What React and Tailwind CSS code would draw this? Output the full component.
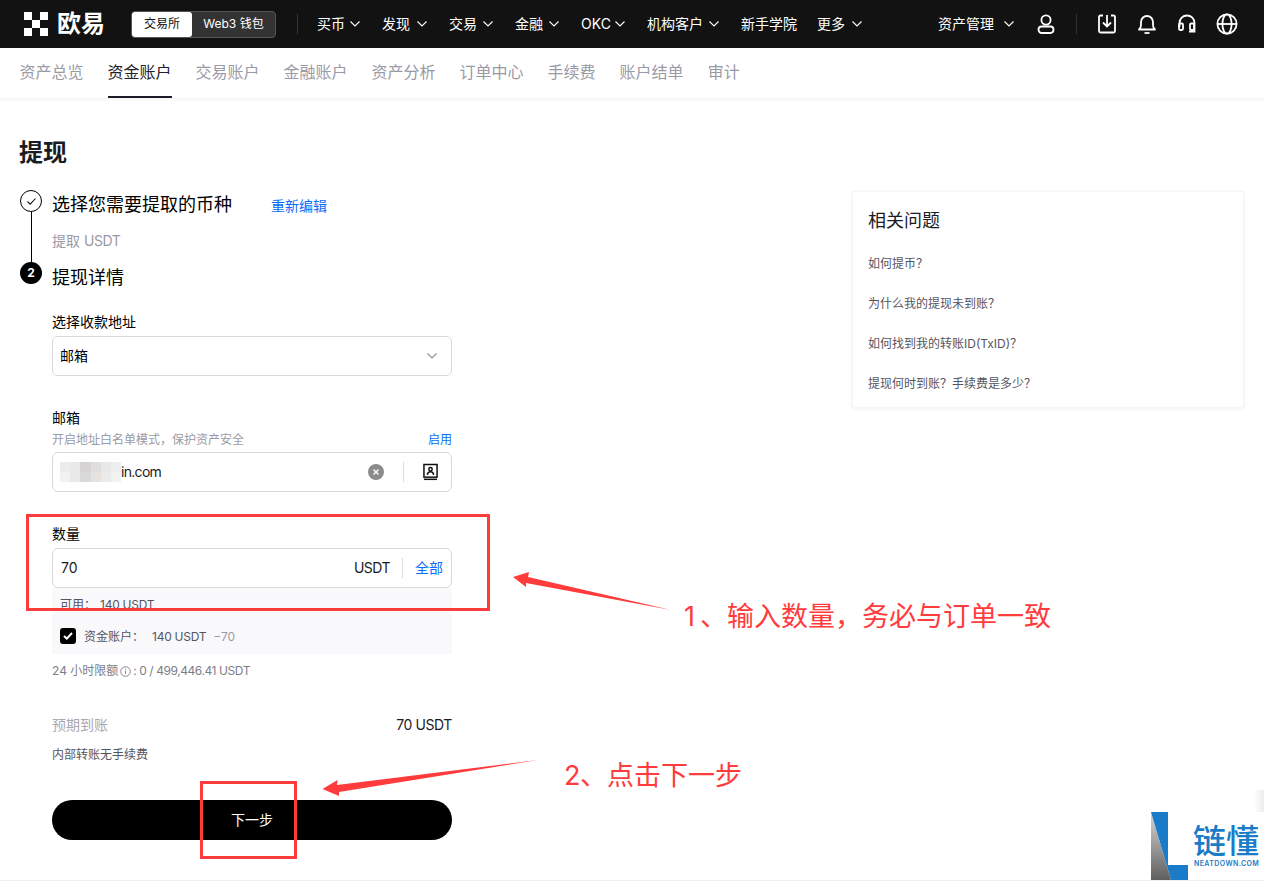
import React from "react";

const Chevron = ({ className = "text-white" }) => (
  <svg width="12" height="8" viewBox="0 0 12 8" fill="none" className={className}>
    <path d="M1.5 1.5 6 6l4.5-4.5" stroke="currentColor" strokeWidth="1.1" />
  </svg>
);

const navItems = [
  ["买币", true, "w-[44px]"],
  ["发现", true, "w-[46px]"],
  ["交易", true, "w-[45px]"],
  ["金融", true, "w-[45px]"],
  ["OKC", true, "w-[45px]"],
  ["机构客户", true, "w-[73px]"],
  ["新手学院", false, "w-[55px]"],
  ["更多", true, "w-[46px]"],
];

const tabs = ["资产总览", "资金账户", "交易账户", "金融账户", "资产分析", "订单中心", "手续费", "账户结单", "审计"];

const faqs = ["如何提币？", "为什么我的提现未到账？", "如何找到我的转账ID(TxID)？", "提现何时到账？手续费是多少？"];

const mosaic = [
  "#ececec", "#e9e7e7", "#d5d3d3", "#dfdddd", "#e8e8e8", "#eeeeee",
  "#f1f1f1", "#e9e9e9", "#d9d9d9", "#e6e2e0", "#ebebeb", "#f1f3f3",
];

function Header() {
  return (
    <header className="h-12 bg-[#121212] flex items-center pl-6 pr-[26px] text-white">
      <svg width="24" height="24" viewBox="0 0 24 24" fill="#fff" className="shrink-0">
        <rect x="0" y="0" width="8" height="8" />
        <rect x="16" y="0" width="8" height="8" />
        <rect x="8" y="8" width="8" height="8" />
        <rect x="0" y="16" width="8" height="8" />
        <rect x="16" y="16" width="8" height="8" />
      </svg>
      <span className="ml-[9px] text-[24px] leading-6 font-bold w-[47px] whitespace-nowrap">欧易</span>
      <div className="ml-[27px] w-[145px] h-[27px] rounded bg-[#333333] border border-[#555555] flex items-center text-xs">
        <span className="w-[60px] h-[25px] bg-white text-[#121212] rounded-[3px] flex items-center justify-center">交易所</span>
        <span className="flex-1 text-center">Web3 钱包</span>
      </div>
      <div className="ml-[21px] w-px h-5 bg-[#333333]" />
      <nav className="ml-[19px] flex items-center gap-[21px] text-sm">
        {navItems.map(([t, c, w]) => (
          <div key={t} className={`flex items-center justify-between whitespace-nowrap ${w}`}>
            <span>{t}</span>
            {c && <Chevron />}
          </div>
        ))}
      </nav>
      <div className="ml-auto flex items-center">
        <span className="text-sm">资产管理</span>
        <span className="ml-[9px] flex"><Chevron /></span>
        <svg width="18" height="20" viewBox="0 0 18 20" fill="none" stroke="#fff" strokeWidth="1.8" className="ml-[22px]">
          <circle cx="9" cy="6" r="4.6" />
          <rect x="1.5" y="12.5" width="15" height="6.5" rx="3.2" />
        </svg>
        <div className="ml-[21px] w-px h-5 bg-[#333333]" />
        <svg width="20" height="20" viewBox="0 0 20 20" fill="none" stroke="#fff" strokeWidth="1.8" className="ml-[20px]">
          <path d="M6 1.5H3.5a1.5 1.5 0 0 0-1.5 1.5v14a1.5 1.5 0 0 0 1.5 1.5h13A1.5 1.5 0 0 0 18 17V3a1.5 1.5 0 0 0-1.5-1.5H14" />
          <path d="M10 1v11M6 8.5l4 4 4-4" />
        </svg>
        <svg width="20" height="20" viewBox="0 0 20 20" fill="none" stroke="#fff" strokeWidth="1.8" className="ml-[20px]">
          <path d="M2 15.5c1.6-1.2 2-2.6 2-4.5V8a6 6 0 0 1 12 0v3c0 1.9.4 3.3 2 4.5z" strokeLinejoin="round" />
          <path d="M7.5 19h5" />
        </svg>
        <svg width="20" height="20" viewBox="0 0 20 20" fill="none" stroke="#fff" strokeWidth="1.8" className="ml-[20px]">
          <path d="M2.5 13V9a7.5 7.5 0 0 1 15 0v5" />
          <rect x="2" y="9.5" width="4" height="6.5" rx="1.2" />
          <rect x="13" y="9.5" width="4" height="6.5" rx="1.2" />
          <path d="M17.5 14v3.5H12" />
        </svg>
        <svg width="22" height="22" viewBox="0 0 22 22" fill="none" stroke="#fff" strokeWidth="1.8" className="ml-[19px]">
          <circle cx="11" cy="11" r="9.6" />
          <ellipse cx="11" cy="11" rx="4.6" ry="9.6" />
          <path d="M1.5 11h19" />
        </svg>
      </div>
    </header>
  );
}

function SubNav() {
  return (
    <div className="h-[50px] bg-white flex pl-[19.5px] gap-6 text-base text-[#9a9aa6] shadow-[0_1px_4px_rgba(0,0,0,0.07)]">
      {tabs.map((t) => (
        <a
          key={t}
          className={`h-full flex items-center whitespace-nowrap border-b-2 ${t === "资金账户" ? "border-[#1c1c2b] text-[#22222c]" : "border-transparent"}`}
        >
          {t}
        </a>
      ))}
    </div>
  );
}

function Divider() {
  return <span className="block w-px h-5 bg-[#dcdcdc]" />;
}

function WithdrawForm() {
  return (
    <div className="w-[433px] shrink-0">
      <h1 className="h-[34px] text-2xl leading-[34px] font-bold text-[#1b1b24]">提现</h1>
      <div className="mt-5 flex">
        <div className="w-[33px] shrink-0 flex flex-col pl-px">
          <div className="w-[22px] h-[22px] rounded-full border border-black flex items-center justify-center">
            <svg width="11" height="9" viewBox="0 0 11 9" fill="none" stroke="#111" strokeWidth="1.1">
              <path d="M1.5 4.5 4.2 7.2 9.5 1.5" />
            </svg>
          </div>
          <div className="ml-[10.5px] w-[1.5px] h-[50px] bg-black" />
          <div className="w-[22px] h-[22px] rounded-full bg-black text-white text-xs font-bold flex items-center justify-center">2</div>
        </div>
        <div className="w-[400px]">
          <div className="h-7 pt-px flex items-center text-black">
            <span className="text-lg whitespace-nowrap">选择您需要提取的币种</span>
            <span className="ml-[39px] mt-[2px] text-sm text-[#0a6cf5]">重新编辑</span>
          </div>
          <div className="mt-[13px] h-5 leading-5 text-sm text-[#9a9aa6]">提取 <span className="tracking-[-0.4px]">USDT</span></div>
          <div className="mt-[13px] h-7 leading-7 text-lg text-black">提现详情</div>

          <div className="mt-5 h-5 leading-5 text-sm text-black">选择收款地址</div>
          <div className="mt-1 h-10 border border-[#d9d9d9] rounded-md flex items-center justify-between pl-[7px] pr-[13px] text-sm text-black">
            <span>邮箱</span>
            <Chevron className="text-[#8e8e96]" />
          </div>

          <div className="mt-8 h-5 leading-5 text-sm text-black">邮箱</div>
          <div className="mt-1 h-4 leading-4 flex justify-between text-xs text-[#9a9aa6]">
            <span>开启地址白名单模式，保护资产安全</span>
            <span className="text-[#0a6cf5]">启用</span>
          </div>
          <div className="mt-1 h-10 border border-[#d9d9d9] rounded-md flex items-center pl-[7px] text-sm text-[#1b1b24]">
            <div className="w-[61px] h-[20px] grid grid-cols-6 grid-rows-2">
              {mosaic.map((c, i) => (
                <span key={i} style={{ backgroundColor: c }} />
              ))}
            </div>
            <span className="tracking-[-0.7px]">in.com</span>
            <div className="ml-auto flex items-center">
              <span className="w-4 h-4 rounded-full bg-[#8b8b8b] flex items-center justify-center">
                <svg width="8" height="8" viewBox="0 0 8 8" stroke="#fff" strokeWidth="1.4"><path d="M1.5 1.5l5 5M6.5 1.5l-5 5" /></svg>
              </span>
              <span className="ml-[19px] flex"><Divider /></span>
              <svg width="15" height="18" viewBox="0 0 16 18" fill="none" stroke="#111" strokeWidth="1.6" className="ml-[19px] mr-[13px]">
                <rect x="1" y="1" width="14" height="13.5" />
                <path d="M1 16.8h14" strokeWidth="1.6" />
                <circle cx="8" cy="6" r="1.8" />
                <path d="M4.6 12c.3-2.2 1.6-3.2 3.4-3.2s3.1 1 3.4 3.2" />
              </svg>
            </div>
          </div>

          <div className="mt-8 h-5 leading-5 text-sm text-black">数量</div>
          <div className="mt-1 h-10 border border-[#d9d9d9] rounded-md flex items-center pl-2 pr-2 text-sm text-[#1b1b24]">
            <span>70</span>
            <span className="ml-auto tracking-[-0.5px]">USDT</span>
            <span className="mx-3 flex items-center"><Divider /></span>
            <span className="text-[#0a6cf5]">全部</span>
          </div>
          <div className="h-[66px] bg-[#f9f9fb] px-2 text-xs text-[#55555f]">
            <div className="h-10 pt-[9px] leading-4 flex">
              <span className="w-[40px]">可用：</span>
              <span className="tracking-[-0.25px]">140 USDT</span>
            </div>
            <div className="h-4 leading-4 flex items-center">
              <span className="w-4 h-4 rounded-[3px] bg-black flex items-center justify-center">
                <svg width="10" height="8" viewBox="0 0 10 8" fill="none" stroke="#fff" strokeWidth="2"><path d="M1 4l2.8 2.6L9 1" /></svg>
              </span>
              <span className="ml-2 w-[60px] whitespace-nowrap pt-0.5">资金账户：</span>
              <span className="ml-2 tracking-[-0.25px] pt-0.5">140 USDT</span>
              <span className="ml-[7px] text-[#9a9aa6] pt-0.5">−70</span>
            </div>
          </div>
          <div className="mt-[9px] h-4 leading-4 flex items-center text-xs text-[#7d7d88] whitespace-nowrap">
            <span>24 小时限额</span>
            <svg width="11" height="11" viewBox="0 0 11 11" fill="none" stroke="#7d7d88" strokeWidth="0.9" className="ml-0.5">
              <circle cx="5.5" cy="5.5" r="4.8" />
              <path d="M5.5 4.5v3.5M5.5 2.4v1" />
            </svg>
            <span className="ml-0.5 tracking-[-0.43px]">: 0 / 499,446.41 USDT</span>
          </div>

          <div className="mt-9 h-5 leading-5 flex justify-between text-sm">
            <span className="text-[#a9a9b2]">预期到账</span>
            <span className="text-[#1b1b24] tracking-[-0.4px]">70 USDT</span>
          </div>
          <div className="mt-3 h-4 leading-4 text-xs text-[#55555f]">内部转账无手续费</div>
          <button className="mt-[37px] w-full h-10 rounded-full bg-black text-white text-sm flex items-center justify-center">下一步</button>
        </div>
      </div>
    </div>
  );
}

function Faq() {
  return (
    <aside className="w-[392px] mt-[55px] self-start border border-[#f5f5f5] shadow-[0_1px_4px_rgba(0,0,0,0.06)] pl-[15px] pr-4 pt-4 pb-[13px]">
      <div className="h-[26px] leading-[26px] text-lg text-[#1b1b24]">相关问题</div>
      <ul className="mt-5 flex flex-col gap-5 text-xs text-[#55555f]">
        {faqs.map((f) => (
          <li key={f} className="h-5 leading-5">{f}</li>
        ))}
      </ul>
    </aside>
  );
}

function Annotations() {
  return (
    <>
      <div className="absolute left-[26px] top-[514px] w-[464px] h-[97px] border-[3px] border-[#ff3b3b]" />
      <div className="absolute left-[200px] top-[781px] w-[97px] h-[78px] border-[3px] border-[#ff3b3b]" />
      <svg className="absolute left-0 top-0 pointer-events-none" width="1264" height="881" fill="#ff3b3b">
        <polygon points="513,577 529,572 528,577 671,610 526,583 526,587" />
        <polygon points="322.5,789 337.5,780 337,785 538,760 339,792 339,796" />
      </svg>
      <div className="absolute left-[684px] top-[598px] text-[27px] leading-[38px] text-[#ff3b3b] whitespace-nowrap">
        <span className="inline-block w-4">1</span>、输入数量，务必与订单一致
      </div>
      <div className="absolute left-[564px] top-[757px] text-[27px] leading-[38px] text-[#ff3b3b] whitespace-nowrap">
        <span className="inline-block w-4">2</span>、点击下一步
      </div>
      <div className="absolute left-[1254px] top-[790px] w-[10px] h-[22px] bg-linear-to-r from-white to-[#ececec]" />
      <div className="absolute left-[1145px] top-[812px] w-[119px] h-[69px] bg-white">
        <svg width="44" height="69" viewBox="0 0 44 69" className="absolute left-[6px] top-0">
          <defs>
            <linearGradient id="lg" x1="0" y1="0" x2="0" y2="1">
              <stop offset="0" stopColor="#d6d6d6" />
              <stop offset="1" stopColor="#5f5f5f" />
            </linearGradient>
          </defs>
          <polygon points="0,0 20,68 0,68" fill="url(#lg)" />
          <polygon points="0,0 17,0 17,53 37,53 37,68 20,68" fill="#1a7cc8" />
        </svg>
        <div className="absolute left-[48px] top-[11px] text-[33px] leading-[36px] font-medium text-[#1a7cc8] whitespace-nowrap">链懂</div>
        <div className="absolute left-[49px] top-[47px] text-[7px] leading-[10px] font-semibold tracking-[0.4px] text-[#1a7cc8] whitespace-nowrap">NEATDOWN.COM</div>
      </div>
    </>
  );
}

export default function App() {
  return (
    <div className="relative h-[881px] overflow-hidden bg-white border-b border-[#eeeeee] font-['Inter','Noto_Sans_CJK_SC',sans-serif]">
      <Header />
      <SubNav />
      <main className="flex justify-between pl-[19px] pr-5 pt-[38px]">
        <WithdrawForm />
        <Faq />
      </main>
      <Annotations />
    </div>
  );
}
